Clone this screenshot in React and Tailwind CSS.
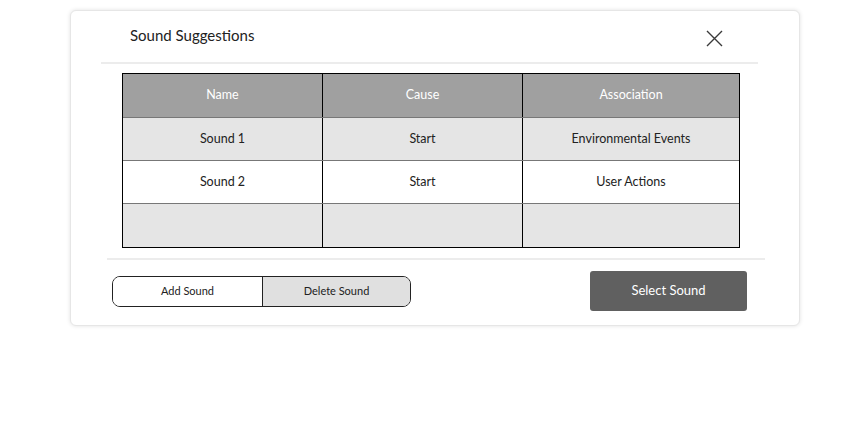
import React from 'react';

const rows = [
  { name: 'Sound 1', cause: 'Start', assoc: 'Environmental Events', bg: 'bg-[#e5e5e5]' },
  { name: 'Sound 2', cause: 'Start', assoc: 'User Actions', bg: 'bg-white' },
  { name: '', cause: '', assoc: '', bg: 'bg-[#e5e5e5]' },
];

function CloseIcon() {
  return (
    <svg width="17" height="17" viewBox="0 0 17 17" fill="none">
      <path d="M1 1L16 16M16 1L1 16" stroke="#3a3a3a" strokeWidth="1.4" />
    </svg>
  );
}

export default function App() {
  return (
    <div className="w-[850px] h-[436px] bg-white pt-[10px] pl-[70px]" style={{ fontFamily: 'Lato, "Noto Sans", sans-serif' }}>
      <div className="w-[730px] h-[316px] rounded-[6px] border border-[#e6e6e6] shadow-[0_0_4px_rgba(0,0,0,0.12)] bg-white flex flex-col">
        <div className="h-[51px] flex items-start justify-between pl-[59px] pr-[76px] pt-[13px]">
          <h1 className="text-[15px] leading-[22px] text-[#222]">Sound Suggestions</h1>
          <div className="pt-[6px]">
            <CloseIcon />
          </div>
        </div>
        <div className="ml-[30px] mr-[41px] h-[2px] bg-[#ececec]" />
        <div className="ml-[51px] mt-[9px] w-[618px] border border-black text-[12.5px] text-[#222]">
          <div className="grid grid-cols-[200px_200px_1fr] h-[43px] bg-[#a0a0a0] text-white">
            <div className="flex items-center justify-center border-r border-black">Name</div>
            <div className="flex items-center justify-center border-r border-black">Cause</div>
            <div className="flex items-center justify-center">Association</div>
          </div>
          {rows.map((r, i) => (
            <div key={i} className={`grid grid-cols-[200px_200px_1fr] h-[43px] border-t border-[#777] ${r.bg} ${i === 2 ? 'h-[44px]' : ''}`}>
              <div className="flex items-center justify-center border-r border-black">{r.name}</div>
              <div className="flex items-center justify-center border-r border-black">{r.cause}</div>
              <div className="flex items-center justify-center">{r.assoc}</div>
            </div>
          ))}
        </div>
        <div className="ml-[36px] mr-[34px] mt-[10px] h-[2px] bg-[#ececec]" />
        <div className="flex items-center justify-between pl-[41px] pr-[52px] mt-[11px]">
          <div className="flex w-[299px] h-[31px] border border-[#222] rounded-[8px] overflow-hidden text-[11px] text-[#222]">
            <button className="w-[150px] bg-white border-r border-[#222]">Add Sound</button>
            <button className="flex-1 bg-[#e0e0e0]">Delete Sound</button>
          </div>
          <button className="w-[157px] h-[40px] rounded-[3px] bg-[#606060] text-white text-[13px]">Select Sound</button>
        </div>
      </div>
    </div>
  );
}
